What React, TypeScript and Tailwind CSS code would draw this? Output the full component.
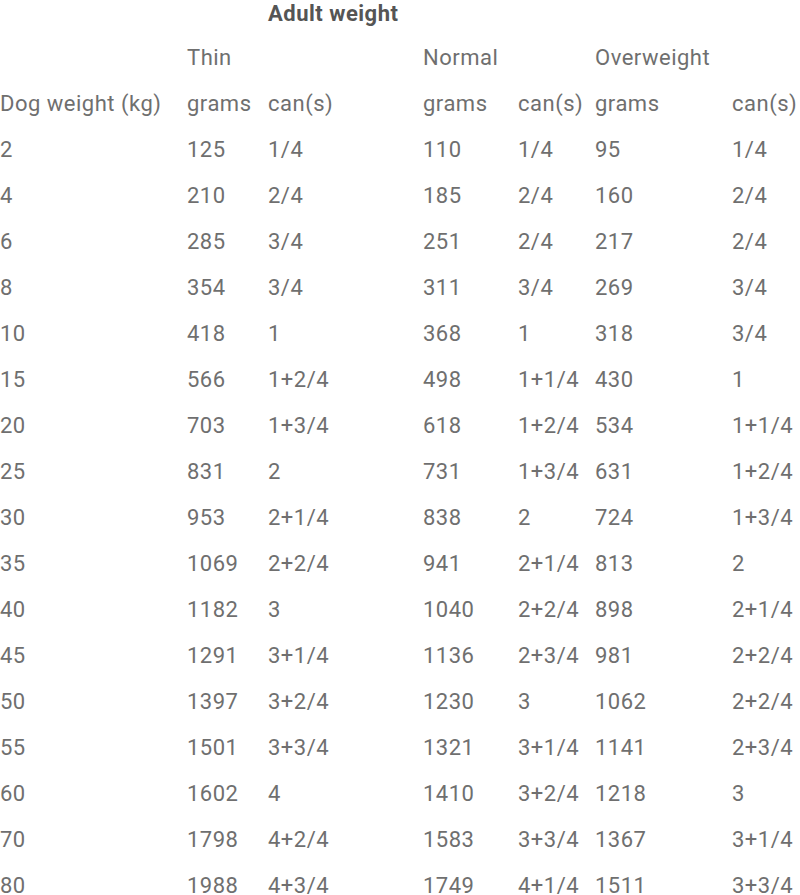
const rows: string[][] = [
  ["2", "125", "1/4", "110", "1/4", "95", "1/4"],
  ["4", "210", "2/4", "185", "2/4", "160", "2/4"],
  ["6", "285", "3/4", "251", "2/4", "217", "2/4"],
  ["8", "354", "3/4", "311", "3/4", "269", "3/4"],
  ["10", "418", "1", "368", "1", "318", "3/4"],
  ["15", "566", "1+2/4", "498", "1+1/4", "430", "1"],
  ["20", "703", "1+3/4", "618", "1+2/4", "534", "1+1/4"],
  ["25", "831", "2", "731", "1+3/4", "631", "1+2/4"],
  ["30", "953", "2+1/4", "838", "2", "724", "1+3/4"],
  ["35", "1069", "2+2/4", "941", "2+1/4", "813", "2"],
  ["40", "1182", "3", "1040", "2+2/4", "898", "2+1/4"],
  ["45", "1291", "3+1/4", "1136", "2+3/4", "981", "2+2/4"],
  ["50", "1397", "3+2/4", "1230", "3", "1062", "2+2/4"],
  ["55", "1501", "3+3/4", "1321", "3+1/4", "1141", "2+3/4"],
  ["60", "1602", "4", "1410", "3+2/4", "1218", "3"],
  ["70", "1798", "4+2/4", "1583", "3+3/4", "1367", "3+1/4"],
  ["80", "1988", "4+3/4", "1749", "4+1/4", "1511", "3+3/4"],
];

const cols = "grid grid-cols-[187px_81px_155px_95px_77px_137px_1fr] h-[46px] items-center whitespace-nowrap";

export default function App() {
  return (
    <div className="h-[895px] w-[800px] overflow-hidden bg-white font-['Roboto',sans-serif] text-[22px] tracking-[0.5px] text-[#6f6f6f]">
      <div className="-mt-[12px]">
        <div className={cols}>
          <div />
          <div />
          <div className="col-span-3 pt-[4px] font-bold text-[#555]">Adult weight</div>
        </div>
        <div className={cols}>
          <div />
          <div className="col-span-2">Thin</div>
          <div className="col-span-2">Normal</div>
          <div className="col-span-2">Overweight</div>
        </div>
        <div className={cols}>
          <div>Dog weight (kg)</div>
          <div>grams</div>
          <div>can(s)</div>
          <div>grams</div>
          <div>can(s)</div>
          <div>grams</div>
          <div>can(s)</div>
        </div>
        {rows.map((r) => (
          <div key={r[0]} className={cols}>
            {r.map((c, i) => (
              <div key={i}>{c}</div>
            ))}
          </div>
        ))}
      </div>
    </div>
  );
}
